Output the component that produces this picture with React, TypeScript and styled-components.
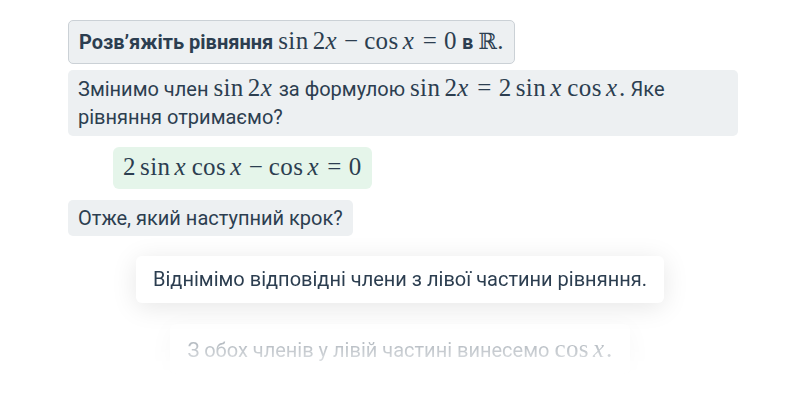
import styled, { createGlobalStyle } from 'styled-components';

const GlobalStyle = createGlobalStyle`
  body {
    margin: 0;
    background: #ffffff;
    font-family: Roboto, "Noto Sans", sans-serif;
    color: #2c3e50;
  }
`;

type Kind = 'op' | 'var' | 'num' | 'rel' | 'bin' | 'bb' | 'punct';
type Atom = { t: string; k: Kind };

const kindOf = (t: string): Kind => {
  if (t === 'sin' || t === 'cos') return 'op';
  if (t === 'x') return 'var';
  if (t === '=') return 'rel';
  if (t === '−') return 'bin';
  if (t === 'R') return 'bb';
  if (t === '.') return 'punct';
  return 'num';
};

// spacing before an atom, in em, roughly as TeX does it
const spaceBefore = (prev: Kind | undefined, cur: Kind) => {
  if (!prev) return 0;
  if (cur === 'rel' || prev === 'rel') return 0.2778;
  if (cur === 'bin' || prev === 'bin') return 0.2222;
  if (prev === 'op' || cur === 'op') return 0.1667;
  return 0;
};

const MathExpr = ({ src }: { src: string }) => {
  const atoms: Atom[] = (src.match(/sin|cos|\d+|x|=|−|R|\./g) || []).map((t) => ({ t, k: kindOf(t) }));
  return (
    <MathWrap>
      {atoms.map((a, i) => (
        <MathAtom key={i} $kind={a.k} $space={spaceBefore(atoms[i - 1]?.k, a.k)}>
          {a.k === 'bb' ? 'ℝ' : a.t}
        </MathAtom>
      ))}
    </MathWrap>
  );
};

const MathWrap = styled.span`
  font-family: "Liberation Serif", "DejaVu Serif", serif;
  font-size: 1.25em;
  line-height: 1;
  letter-spacing: 0.015em;
  font-weight: 400;
  white-space: nowrap;
`;

const MathAtom = styled.span<{ $kind: Kind; $space: number }>`
  font-style: ${(p) => (p.$kind === 'var' ? 'italic' : 'normal')};
  font-family: ${(p) => (p.$kind === 'bb' ? '"DejaVu Serif", serif' : 'inherit')};
  font-size: ${(p) => (p.$kind === 'bb' ? '0.9em' : '1em')};
  margin-left: ${(p) => p.$space}em;
  margin-right: ${(p) => (p.$kind === 'var' ? '0.06em' : '0')};
`;

const Page = styled.div`
  width: 800px;
  height: 400px;
  overflow: hidden;
  box-sizing: border-box;
  padding: 20px 0 0 68px;
  display: flex;
  flex-direction: column;
`;

const Thread = styled.div`
  width: 670px;
  display: flex;
  flex-direction: column;
  align-items: flex-start;
`;

const Bubble = styled.div<{ $bordered?: boolean; $gapTop?: number; $padY?: number }>`
  background: #edf0f2;
  border: ${(p) => (p.$bordered ? '1px solid #cbd1d6' : 'none')};
  border-radius: 5px;
  box-sizing: border-box;
  padding: ${(p) => p.$padY ?? 4}px 10px;
  font-size: 20px;
  line-height: 28px;
  color: #2c3e50;
  margin-top: ${(p) => p.$gapTop ?? 0}px;
`;

const Strong = styled.span`
  font-weight: 700;
`;

const Answer = styled.div`
  margin: 11px 0 0 45px;
  background: #e5f5ea;
  border-radius: 6px;
  padding: 6px 10px;
  font-size: 20px;
  line-height: 30px;
  color: #2c3e50;
`;

const Choices = styled.div`
  margin-left: -68px;
  width: 800px;
  display: flex;
  flex-direction: column;
  align-items: center;
  gap: 21px;
  padding-top: 20px;
  -webkit-mask-image: linear-gradient(to bottom, #000 0, #000 108px, transparent 142px);
  mask-image: linear-gradient(to bottom, #000 0, #000 108px, transparent 142px);
`;

const Choice = styled.div<{ $faded?: boolean }>`
  background: #ffffff;
  border-radius: 6px;
  box-shadow: 0 4px 26px rgba(0, 0, 0, 0.1);
  padding: ${(p) => (p.$faded ? '12px 17px 9px' : '9px 17px')};
  font-size: 20px;
  line-height: 29px;
  color: #2c3e50;
  opacity: ${(p) => (p.$faded ? 0.34 : 1)};
`;

const App = () => (
  <>
    <GlobalStyle />
    <Page>
      <Thread>
        <Bubble $bordered $padY={7}>
          <Strong>Розв’яжіть рівняння</Strong> <MathExpr src="sin 2x − cos x = 0" /> <Strong>в</Strong>{' '}
          <MathExpr src="R." />
        </Bubble>
        <Bubble $gapTop={6} $padY={5}>
          Змінимо член <MathExpr src="sin 2x" /> за формулою <MathExpr src="sin 2x = 2 sin x cos x." /> Яке
          рівняння отримаємо?
        </Bubble>
        <Answer>
          <MathExpr src="2 sin x cos x − cos x = 0" />
        </Answer>
        <Bubble $gapTop={11}>Отже, який наступний крок?</Bubble>
      </Thread>
      <Choices>
        <Choice>Віднімімо відповідні члени з лівої частини рівняння.</Choice>
        <Choice $faded>
          З обох членів у лівій частині винесемо <MathExpr src="cos x." />
        </Choice>
      </Choices>
    </Page>
  </>
);

export default App;
